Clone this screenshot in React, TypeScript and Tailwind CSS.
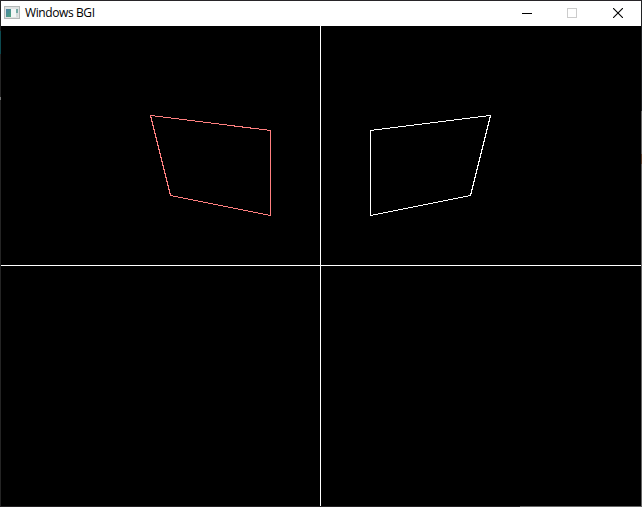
import React from "react";

function AppIcon() {
  return (
    <svg width="16" height="13" viewBox="0 0 16 13" shapeRendering="crispEdges" className="mb-[2px]">
      <defs>
        <linearGradient id="pane" x1="0" y1="0" x2="1" y2="1">
          <stop offset="0" stopColor="#4a82a8" />
          <stop offset="1" stopColor="#4fa878" />
        </linearGradient>
      </defs>
      <rect width="16" height="13" fill="#b4b8b8" />
      <rect x="1" y="1" width="14" height="11" fill="#dfe2e2" />
      <rect x="2" y="3" width="6" height="8" fill="url(#pane)" />
      <rect x="7" y="3" width="5" height="8" fill="#f2f6f6" />
      <rect x="12" y="3" width="2" height="4" fill="#74aaa6" />
      <rect x="12" y="7" width="2" height="4" fill="#d5dcdc" />
    </svg>
  );
}

function TitleBar() {
  return (
    <header className="flex h-[25px] items-center bg-white">
      <div className="flex flex-1 items-center gap-[5px] pl-[3px]">
        <AppIcon />
        <span className="-mt-px whitespace-nowrap font-['Open_Sans','Noto_Sans',sans-serif] text-[12px] leading-[16px] tracking-[-0.4px] text-black">
          Windows BGI
        </span>
      </div>
      <div className="flex h-full">
        <button aria-label="Minimize" className="flex w-[45px] items-center justify-center">
          <svg width="10" height="11" shapeRendering="crispEdges">
            <rect y="5" width="10" height="1" fill="#000" />
          </svg>
        </button>
        <button aria-label="Maximize" disabled className="flex w-[45px] items-center justify-center pb-px">
          <svg width="10" height="10" shapeRendering="crispEdges">
            <rect x="0.5" y="0.5" width="9" height="9" fill="none" stroke="#ccc" />
          </svg>
        </button>
        <button aria-label="Close" className="flex w-[47px] items-center justify-center pb-px">
          <svg width="10" height="10">
            <path d="M0 0L10 10M10 0L0 10" stroke="#000" strokeWidth="1.1" />
          </svg>
        </button>
      </div>
    </header>
  );
}

export default function App() {
  return (
    <div className="flex h-[507px] w-[642px] flex-col overflow-hidden bg-[#242224]">
      <div className="h-px shrink-0 bg-[#282529]" />
      <div className="flex h-[505px]">
        <div className="flex w-px flex-col bg-[#242424]">
          <div className="mt-[30px] h-[23px] bg-[#0c4a50]" />
          <div className="mt-[43px] h-[3px] bg-[#777]" />
        </div>
        <main className="flex w-[640px] flex-col">
          <TitleBar />
          <svg width="640" height="480" className="block bg-black" shapeRendering="crispEdges">
            <rect x="319" y="0" width="1" height="480" fill="#fff" />
            <rect x="0" y="239" width="640" height="1" fill="#fff" />
            <polygon points="149.5,89.5 269.5,104.5 269.5,189.5 169.5,169.5" fill="none" stroke="#ff8080" />
            <polygon points="489.5,89.5 369.5,104.5 369.5,189.5 469.5,169.5" fill="none" stroke="#fff" />
          </svg>
        </main>
        <div className="flex w-px flex-col bg-[#666]">
          <div className="h-[110px] bg-[#202224]" />
          <div className="mt-[43px] h-[10px] bg-[#5c4030]" />
        </div>
      </div>
      <div className="flex h-px">
        <div className="w-[520px] bg-[#242224]" />
        <div className="flex-1 bg-[#666]" />
      </div>
    </div>
  );
}
